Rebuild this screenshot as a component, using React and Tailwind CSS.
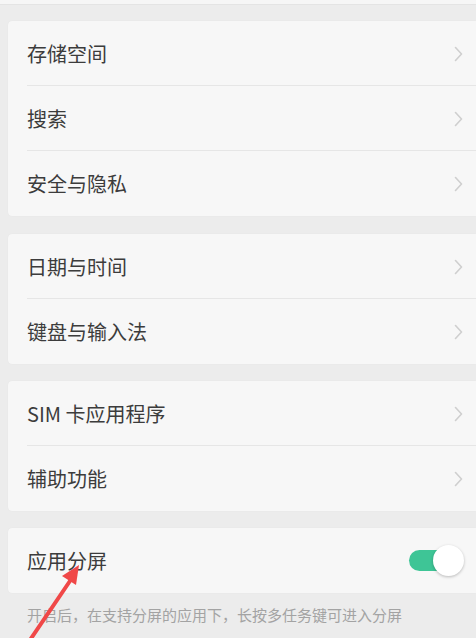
import React from "react";

const Chevron = () => (
  <svg width="9" height="16" viewBox="0 0 9 16" fill="none">
    <path d="M1.5 1.5 L7.5 8 L1.5 14.5" stroke="#cfcfcf" strokeWidth="1.6" strokeLinecap="round" strokeLinejoin="round" />
  </svg>
);

const Row = ({ label, last, right }) => (
  <div className="relative flex h-[65px] items-center justify-between pl-[19px] pr-[13px]">
    <span className="text-[20px] text-[#3c3c3c] leading-none">{label}</span>
    {right || <Chevron />}
    {!last && <div className="absolute bottom-0 left-[19px] right-0 h-px bg-[#e6e6e6]" />}
  </div>
);

const Card = ({ children, className = "" }) => (
  <div className={`ml-[8px] rounded-l-[4px] bg-[#f7f7f7] shadow-[0_0_1px_rgba(0,0,0,0.08)] ${className}`}>{children}</div>
);

const Toggle = () => (
  <div className="relative mr-[-1px] h-[31px] w-[55px]">
    <div className="absolute left-0 top-[5px] h-[21px] w-[48px] rounded-full bg-[#3ec596]" />
    <div className="absolute right-0 top-0 h-[31px] w-[31px] rounded-full bg-white shadow-[0_1px_3px_rgba(0,0,0,0.25)]" />
  </div>
);

export default function App() {
  return (
    <div
      className="relative h-[638px] w-[476px] overflow-hidden bg-[#ececec]"
      style={{ fontFamily: '"Noto Sans CJK SC", "Noto Sans", sans-serif' }}
    >
      <div className="h-[5px] w-full bg-[#f6f6f6] border-b border-[#e4e4e4]" />
      <Card className="mt-[16px]">
        <Row label="存储空间" />
        <Row label="搜索" />
        <Row label="安全与隐私" last />
      </Card>
      <Card className="mt-[18px]">
        <Row label="日期与时间" />
        <Row label="键盘与输入法" last />
      </Card>
      <Card className="mt-[17px]">
        <Row label="SIM 卡应用程序" />
        <Row label="辅助功能" last />
      </Card>
      <Card className="mt-[17px]">
        <Row label="应用分屏" last right={<Toggle />} />
      </Card>
      <div className="pl-[27px] pt-[7px] text-[15px] text-[#a3a3a3] leading-[30px]">
        开启后，在支持分屏的应用下，长按多任务键可进入分屏
      </div>
      <svg className="pointer-events-none absolute left-0 top-0" width="476" height="638">
        <line x1="30" y1="640" x2="72" y2="578" stroke="#f04848" strokeWidth="4" strokeLinecap="round" />
        <polygon points="79,565 62,576 76,585" fill="#f04848" />
      </svg>
    </div>
  );
}
